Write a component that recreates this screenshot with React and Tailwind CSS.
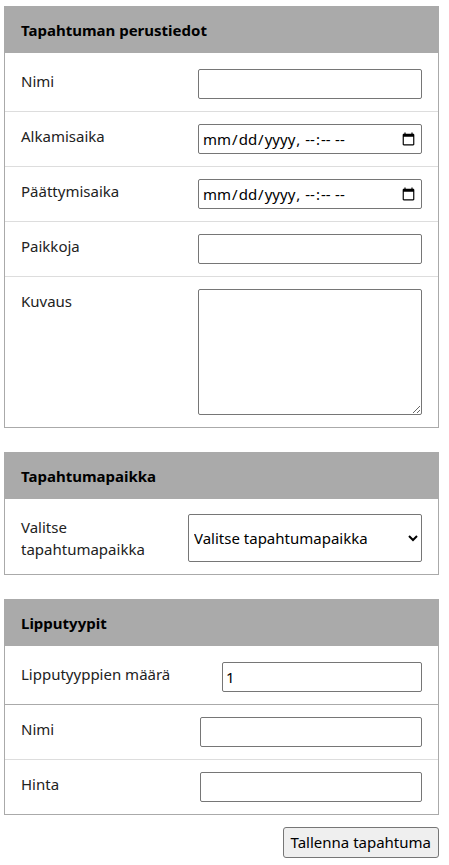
import { useState } from "react";

const field = "h-[30px] border border-[#767676] rounded-[2px] bg-white px-[3px] text-[15px] text-black";

function Card({ title, children }) {
  return (
    <section className="w-[435px] border border-[#aaaaaa] bg-white">
      <h2 className="h-[46px] bg-[#aaaaaa] px-4 flex items-center text-[15px] font-bold text-black">{title}</h2>
      {children}
    </section>
  );
}

function Row({ label, first, last, darkLine, inputW, children }) {
  const line = last ? "" : darkLine ? "border-b border-[#aaaaaa]" : "border-b border-[#dddddd]";
  return (
    <div className={`flex items-start pl-4 pr-4 pb-3 ${first ? "pt-4" : "pt-3"} ${line}`}>
      <label className="flex-1 pt-[1px] leading-[22px]">{label}</label>
      <div style={{ width: inputW }} className="shrink-0 flex">
        {children}
      </div>
    </div>
  );
}

export default function App() {
  const [seats, setSeats] = useState("1");
  return (
    <div className="min-h-[865px] bg-white pl-1 pt-1.5 font-['Noto_Sans',sans-serif] text-[15px] text-[#222222]">
      <Card title="Tapahtuman perustiedot">
        <Row label="Nimi" first inputW={224}>
          <input type="text" className={`${field} w-full`} />
        </Row>
        <Row label="Alkamisaika" inputW={224}>
          <input type="datetime-local" className={`${field} w-full`} />
        </Row>
        <Row label="Päättymisaika" inputW={224}>
          <input type="datetime-local" className={`${field} w-full`} />
        </Row>
        <Row label="Paikkoja" inputW={224}>
          <input type="text" className={`${field} w-full`} />
        </Row>
        <Row label="Kuvaus" last inputW={224}>
          <textarea className="w-full h-[126px] border border-[#767676] rounded-[2px] bg-white p-[2px] text-[15px]" />
        </Row>
      </Card>

      <div className="mt-6">
        <Card title="Tapahtumapaikka">
          <div className="flex items-start pl-4 pr-4 pt-[15px] pb-3">
            <label className="flex-1 pt-[2px] leading-[22px]">
              Valitse
              <br />
              tapahtumapaikka
            </label>
            <select className="w-[234px] h-[48px] shrink-0 border border-[#767676] rounded-[2px] bg-white pl-[1px] text-[15px] text-black">
              <option>Valitse tapahtumapaikka</option>
            </select>
          </div>
        </Card>
      </div>

      <div className="mt-6">
        <Card title="Lipputyypit">
          <Row label="Lipputyyppien määrä" first darkLine inputW={200}>
            <input type="number" value={seats} onChange={(e) => setSeats(e.target.value)} className={`${field} w-full`} />
          </Row>
          <Row label="Nimi" inputW={222}>
            <input type="text" className={`${field} w-full`} />
          </Row>
          <Row label="Hinta" last inputW={222}>
            <input type="text" className={`${field} w-full`} />
          </Row>
        </Card>
      </div>

      <div className="w-[435px] flex justify-end mt-3">
        <button className="h-[31px] px-[7px] border border-[#767676] rounded-[3px] bg-[#efefef] text-[15px] text-black">
          Tallenna tapahtuma
        </button>
      </div>
    </div>
  );
}
